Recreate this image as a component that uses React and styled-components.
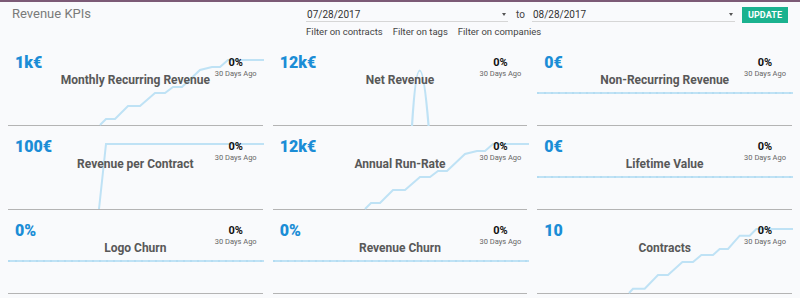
import React from "react";
import styled, { createGlobalStyle } from "styled-components";

const Global = createGlobalStyle`
  html, body { margin: 0; padding: 0; background: #f9fafc; }
  body { font-family: Roboto, "Liberation Sans", Arial, sans-serif; }
`;

const Page = styled.div`
  width: 800px;
  height: 298px;
  overflow: hidden;
  background: #f9fafc;
  border-top: 2px solid #7c5a76;
  box-sizing: border-box;
`;

const Header = styled.div`
  display: flex;
  height: 40px;
  padding: 4px 12px 0 12px;
  box-sizing: border-box;
`;

const PageTitle = styled.div`
  width: 296px;
  font-size: 13px;
  color: #7a7a7a;
  line-height: 16px;
`;

const Controls = styled.div`
  display: flex;
  flex-direction: column;
`;

const DateRow = styled.div`
  display: flex;
  align-items: center;
  height: 17px;
`;

const DateField = styled.div`
  position: relative;
  width: ${(p) => p.$w}px;
  height: 14px;
  border-bottom: 1px solid #d6d6d6;
  font-size: 10px;
  line-height: 14px;
  color: #333;
  padding-left: 1px;
  box-sizing: border-box;
`;

const Caret = styled.span`
  position: absolute;
  right: 2px;
  top: 5px;
  width: 0;
  height: 0;
  border-left: 2.5px solid transparent;
  border-right: 2.5px solid transparent;
  border-top: 3px solid #555;
`;

const To = styled.span`
  font-size: 10px;
  color: #444;
  margin: 0 7px 0 8px;
`;

const UpdateButton = styled.button`
  margin-left: 7px;
  width: 46px;
  height: 16px;
  padding: 0;
  border: none;
  background: #1bb28f;
  color: #fff;
  font-family: Roboto, "Liberation Sans", Arial, sans-serif;
  font-weight: 700;
  font-size: 9px;
  letter-spacing: 0.1px;
`;

const FilterRow = styled.div`
  display: flex;
  gap: 10px;
  margin-top: 3px;
  font-size: 9.5px;
  line-height: 12px;
  color: #444;
`;

const Grid = styled.div`
  display: grid;
  grid-template-columns: repeat(3, 1fr);
  column-gap: 10px;
  padding: 0 8px;
`;

const Card = styled.div`
  position: relative;
  height: 84px;
  border-bottom: 1px solid #b4b4b4;
  box-sizing: border-box;
`;

const Chart = styled.svg`
  position: absolute;
  left: 0;
  top: 0;
  width: 100%;
  height: 100%;
  overflow: visible;
  z-index: 0;
`;

const TopRow = styled.div`
  position: relative;
  z-index: 1;
  display: flex;
  justify-content: space-between;
  align-items: flex-start;
  height: 20px;
  padding: 11px 6px 0 7px;
`;

const Value = styled.div`
  font-size: 16px;
  font-weight: 900;
  line-height: 20px;
  color: #1b8dd6;
`;

const Trend = styled.div`
  display: flex;
  flex-direction: column;
  align-items: center;
  padding-top: 4px;
`;

const TrendPct = styled.div`
  font-size: 11px;
  font-weight: 700;
  line-height: 12px;
  color: #111;
`;

const TrendLabel = styled.div`
  font-size: 7.5px;
  line-height: 9px;
  color: #666;
`;

const CardTitle = styled.div`
  position: relative;
  z-index: 1;
  text-align: center;
  font-size: 12px;
  font-weight: 700;
  line-height: 14px;
  color: #585858;
`;

const LINE = "#bfe2f5";

const stepsMRR =
  "M92,83 L98,77 L107,77 L120,64 L132,64 L147,51 L157,51 L165,45 L174,45 L192,28 L204,25 L212,25 L220,18 L256,18";
const stepsContracts =
  "M92,83 L96,78.7 L107.7,78.7 L121,65 L131,65 L145.4,52 L156,52 L164.4,45 L176,45 L182.7,39 L191,39 L202.7,25.7 L212.7,25.7 L219.4,19 L256,19";

const charts = {
  steps: <path d={stepsMRR} fill="none" stroke={LINE} strokeWidth="2" />,
  contracts: <path d={stepsContracts} fill="none" stroke={LINE} strokeWidth="2" />,
  spike: (
    <path d="M139,84 C143.5,10 149.5,10 155.6,84" fill="none" stroke={LINE} strokeWidth="2.2" />
  ),
  jump: <path d="M91,83 L98,18 L256,18" fill="none" stroke={LINE} strokeWidth="2" />,
  flat: (
    <g>
      <line x1="0" y1="51" x2="256" y2="51" stroke={LINE} strokeWidth="2" />
      <line x1="0" y1="51" x2="256" y2="51" stroke="#a9d6ee" strokeWidth="1" strokeDasharray="2 5" />
    </g>
  ),
};

const kpis = [
  { value: "1k€", title: "Monthly Recurring Revenue", chart: "steps" },
  { value: "12k€", title: "Net Revenue", chart: "spike" },
  { value: "0€", title: "Non-Recurring Revenue", chart: "flat" },
  { value: "100€", title: "Revenue per Contract", chart: "jump" },
  { value: "12k€", title: "Annual Run-Rate", chart: "steps" },
  { value: "0€", title: "Lifetime Value", chart: "flat" },
  { value: "0%", title: "Logo Churn", chart: "flat" },
  { value: "0%", title: "Revenue Churn", chart: "flat" },
  { value: "10", title: "Contracts", chart: "contracts" },
];

function KpiCard({ value, title, chart }) {
  return (
    <Card>
      <Chart>{charts[chart]}</Chart>
      <TopRow>
        <Value>{value}</Value>
        <Trend>
          <TrendPct>0%</TrendPct>
          <TrendLabel>30 Days Ago</TrendLabel>
        </Trend>
      </TopRow>
      <CardTitle>{title}</CardTitle>
    </Card>
  );
}

export default function App() {
  return (
    <>
      <Global />
      <Page>
        <Header>
          <PageTitle>Revenue KPIs</PageTitle>
          <Controls>
            <DateRow>
              <DateField $w={202}>
                07/28/2017
                <Caret />
              </DateField>
              <To>to</To>
              <DateField $w={203}>
                08/28/2017
                <Caret />
              </DateField>
              <UpdateButton>UPDATE</UpdateButton>
            </DateRow>
            <FilterRow>
              <span>Filter on contracts</span>
              <span>Filter on tags</span>
              <span>Filter on companies</span>
            </FilterRow>
          </Controls>
        </Header>
        <Grid>
          {kpis.map((k, i) => (
            <KpiCard key={i} {...k} />
          ))}
        </Grid>
      </Page>
    </>
  );
}
